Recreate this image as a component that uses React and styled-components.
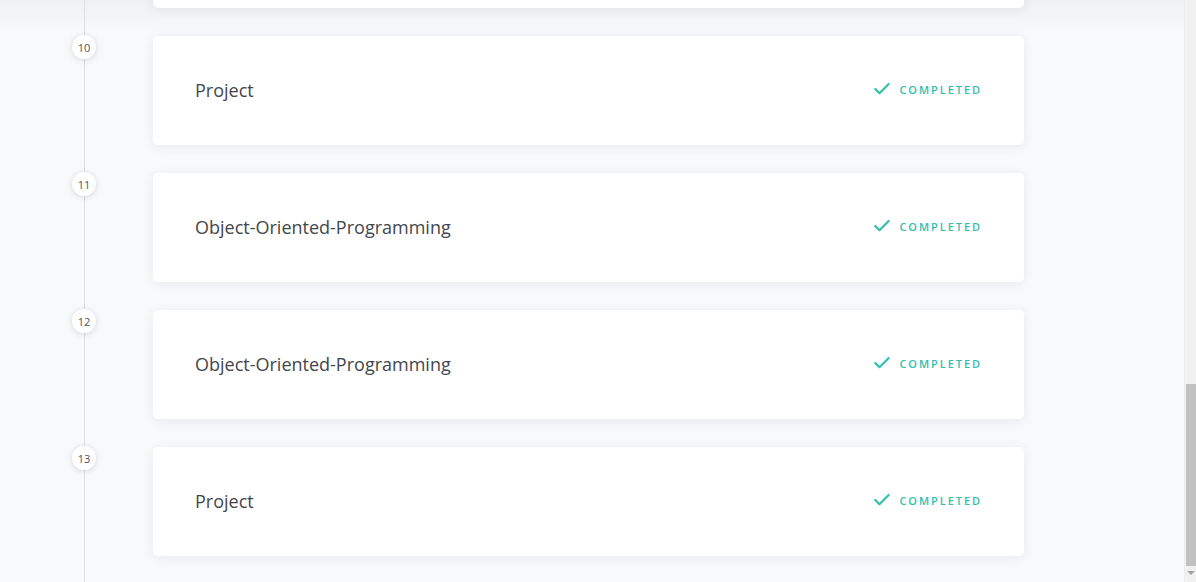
import React from 'react'
import styled, { createGlobalStyle } from 'styled-components'
import { Check } from 'lucide-react'

const GlobalStyle = createGlobalStyle`
  html, body {
    margin: 0;
    padding: 0;
    height: 100%;
    overflow: hidden;
    background: #f8f9fb;
    font-family: "Open Sans", "Liberation Sans", sans-serif;
  }
  #root {
    height: 100%;
  }
`

const Page = styled.div`
  display: flex;
  height: 582px;
  overflow: hidden;
`

const Main = styled.div`
  flex: 1;
  overflow: hidden;
  background:
    linear-gradient(to bottom, rgba(0, 0, 0, 0.035), rgba(0, 0, 0, 0) 34px),
    #f8f9fb;
`

const Timeline = styled.div`
  display: flex;
  flex-direction: column;
  gap: 28px;
  width: 1024px;
  margin-top: -101px;
  padding-bottom: 40px;
  background: linear-gradient(#dcdfe3, #dcdfe3) no-repeat 84px 0 / 1px 100%;
`

const Row = styled.div`
  display: grid;
  grid-template-columns: 153px 871px;
  align-items: start;
`

const Marker = styled.div`
  width: 24px;
  height: 24px;
  margin: -1px 0 0 72px;
  border-radius: 50%;
  background: #fff;
  box-shadow: 0 1px 6px rgba(0, 0, 0, 0.14);
  display: flex;
  align-items: center;
  justify-content: center;
  font-size: 11px;
  font-weight: 500;
  color: #505358;
`

const Card = styled.div`
  height: 109px;
  box-sizing: border-box;
  padding: 0 42px;
  background: #fff;
  border-radius: 5px;
  box-shadow: 0 2px 12px rgba(20, 30, 50, 0.07);
  display: flex;
  align-items: center;
  justify-content: space-between;
`

const Title = styled.div`
  font-size: 18px;
  color: #43474b;
  padding-bottom: 2px;
`

const Status = styled.div`
  display: flex;
  align-items: center;
  gap: 7px;
  color: #2fbfae;
  font-size: 11px;
  font-weight: 600;
  letter-spacing: 1.95px;
  margin-bottom: 3px;
`

const Scrollbar = styled.div`
  width: 11px;
  flex: none;
  background: #f1f1f1;
  border-left: 1px solid #ececec;
  display: flex;
  flex-direction: column;
  justify-content: flex-end;
`

const Thumb = styled.div`
  height: 182px;
  margin: 0 0 0 1px;
  background: #c1c1c1;
`

const Arrow = styled.div`
  height: 16px;
  display: flex;
  justify-content: center;
  padding-top: 5px;
  box-sizing: border-box;
  &::after {
    content: '';
    border-left: 4px solid transparent;
    border-right: 4px solid transparent;
    border-top: 4px solid #a3a3a3;
    height: 0;
  }
`

// first lesson sits above the fold: only its card's bottom edge shows
const lessons = [
  { n: 9, title: null },
  { n: 10, title: 'Project' },
  { n: 11, title: 'Object-Oriented-Programming' },
  { n: 12, title: 'Object-Oriented-Programming' },
  { n: 13, title: 'Project' },
]

export default function App() {
  return (
    <>
      <GlobalStyle />
      <Page>
        <Main>
          <Timeline>
            {lessons.map((l) => (
              <Row key={l.n}>
                <Marker>{l.title ? l.n : ''}</Marker>
                <Card>
                  {l.title && (
                    <>
                      <Title>{l.title}</Title>
                      <Status>
                        <Check size={20} strokeWidth={2.6} />
                        COMPLETED
                      </Status>
                    </>
                  )}
                </Card>
              </Row>
            ))}
          </Timeline>
        </Main>
        <Scrollbar>
          <Thumb />
          <Arrow />
        </Scrollbar>
      </Page>
    </>
  )
}
